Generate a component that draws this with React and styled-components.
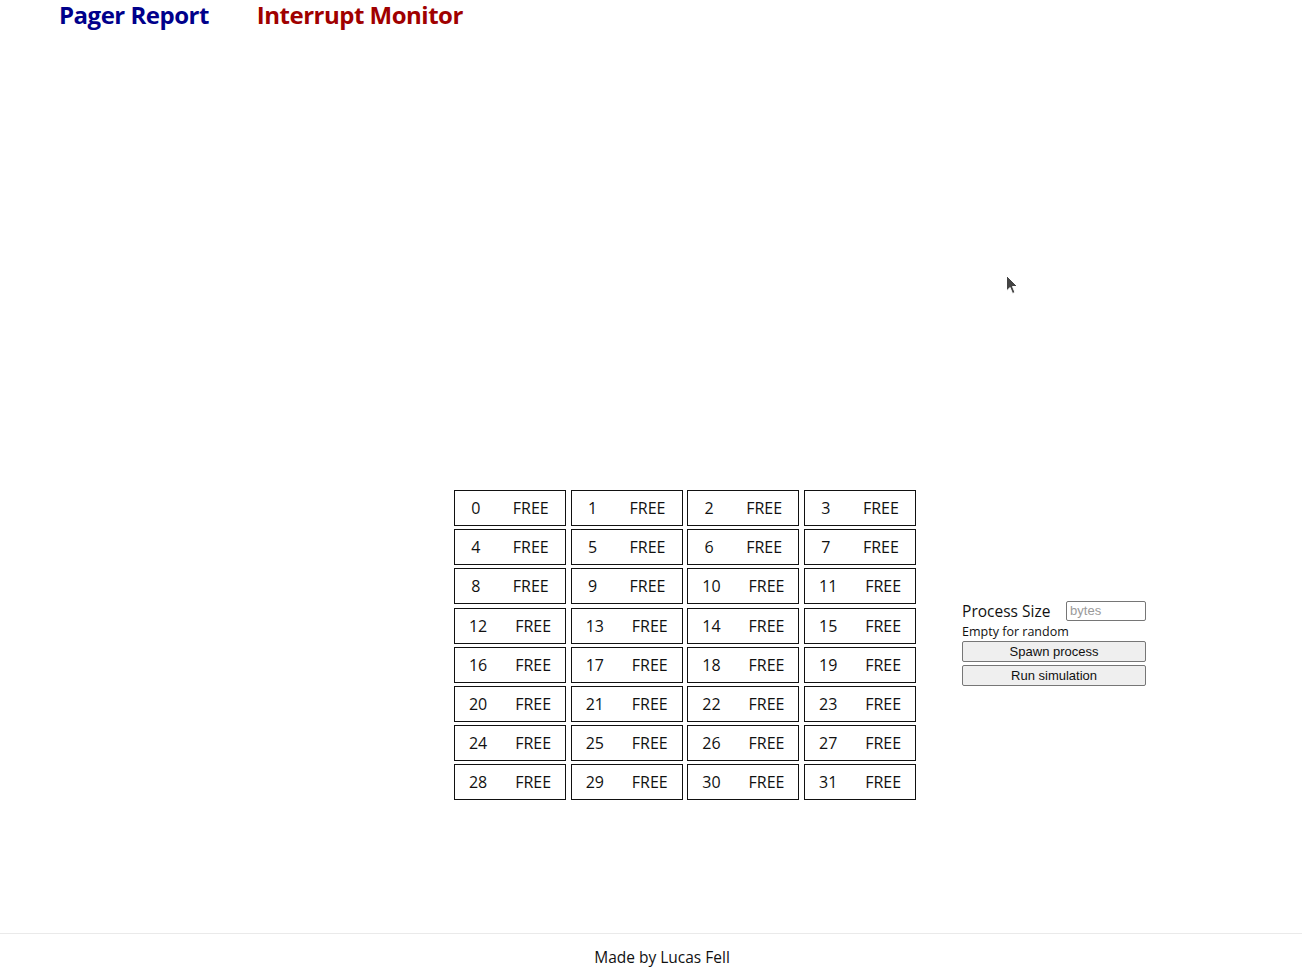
import React from "react";
import styled, { createGlobalStyle } from "styled-components";

const GlobalStyle = createGlobalStyle`
  html, body {
    margin: 0;
    padding: 0;
    background: #fff;
    font-family: "Open Sans", "Noto Sans", sans-serif;
  }
`;

const Page = styled.div`
  position: relative;
  min-height: 974px;
  display: flex;
  flex-direction: column;
`;

const Header = styled.header`
  display: flex;
  gap: 48px;
  padding: 0 0 0 59px;
  height: 40px;
`;

const Title = styled.h1`
  margin: 0;
  font-size: 24px;
  line-height: 30px;
  font-weight: 700;
  letter-spacing: -0.5px;
  color: ${(p) => p.color};
`;

const Main = styled.main`
  display: flex;
  align-items: center;
  gap: 46px;
  margin: 450px 0 0 454px;
`;

const Grid = styled.div`
  display: grid;
  grid-template-columns: repeat(4, 112px);
  grid-auto-rows: 36px;
  column-gap: 4.7px;
  row-gap: 3.2px;
`;

const Cell = styled.div`
  display: flex;
  align-items: center;
  justify-content: space-around;
  border: 1.5px solid #111;
  box-sizing: border-box;
  font-size: 16px;
  color: #111;
`;

const Panel = styled.div`
  display: flex;
  flex-direction: column;
  width: 184px;
  margin-top: -2px;
`;

const SizeRow = styled.div`
  display: flex;
  align-items: center;
  justify-content: space-between;
  height: 22px;
`;

const Label = styled.label`
  font-size: 15.5px;
  color: #111;
`;

const SizeInput = styled.input`
  width: 80px;
  height: 20px;
  box-sizing: border-box;
  border: 1px solid #767676;
  border-radius: 2px;
  padding: 1px 3px;
  font-family: "Liberation Sans", Arial, sans-serif;
  font-size: 13px;
  &::placeholder {
    color: #9a9a9a;
  }
`;

const Hint = styled.div`
  font-size: 12.5px;
  line-height: 17px;
  color: #111;
  margin: 1px 0 1px;
`;

const Button = styled.button`
  width: 184px;
  height: 21px;
  margin-bottom: 3px;
  padding: 0;
  font-family: "Liberation Sans", Arial, sans-serif;
  font-size: 13px;
  color: #111;
  background: #efefef;
  border: 1px solid #767676;
  border-radius: 2px;
`;

const Footer = styled.footer`
  margin-top: auto;
  border-top: 1px solid #eaeaea;
  height: 41px;
  display: flex;
  align-items: center;
  justify-content: center;
  font-size: 15.5px;
  color: #111;
  padding: 6px 0 0 22px;
  box-sizing: border-box;
`;

const Cursor = styled.svg`
  position: absolute;
  left: 1005px;
  top: 274px;
`;

const frames = Array.from({ length: 32 }, (_, i) => i);

export default function App() {
  return (
    <Page>
      <GlobalStyle />
      <Header>
        <Title color="#00008b">Pager Report</Title>
        <Title color="#a00000">Interrupt Monitor</Title>
      </Header>
      <Main>
        <Grid>
          {frames.map((n) => (
            <Cell key={n}>
              <span>{n}</span>
              <span>FREE</span>
            </Cell>
          ))}
        </Grid>
        <Panel>
          <SizeRow>
            <Label>Process Size</Label>
            <SizeInput placeholder="bytes" />
          </SizeRow>
          <Hint>Empty for random</Hint>
          <Button>Spawn process</Button>
          <Button>Run simulation</Button>
        </Panel>
      </Main>
      <Footer>Made by Lucas Fell</Footer>
      <Cursor width="16" height="22" viewBox="0 0 16 22">
        <path d="M1.5 1.5 L1.5 17 L5 13.5 L7.5 19.5 L10 18.5 L7.5 12.5 L12.5 12.5 Z" fill="#444" stroke="#fff" strokeWidth="1" />
      </Cursor>
    </Page>
  );
}
